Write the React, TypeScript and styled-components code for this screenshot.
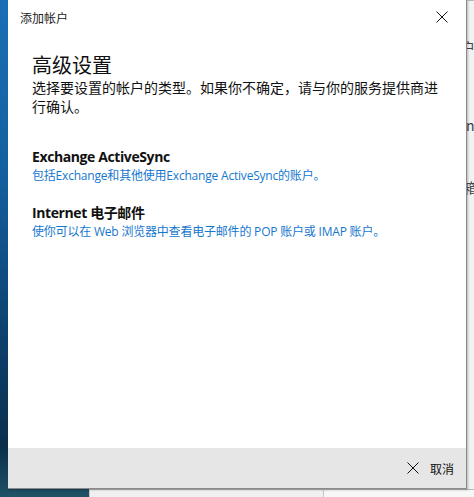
import React from "react";
import styled, { createGlobalStyle } from "styled-components";

const Global = createGlobalStyle`
  html, body { margin: 0; padding: 0; }
  body { width: 474px; height: 497px; overflow: hidden; }
`;

const FONT = `"Segoe UI", "Open Sans", "Noto Sans CJK SC", sans-serif`;

const Desktop = styled.div`
  position: relative;
  width: 474px;
  height: 497px;
  overflow: hidden;
  background: linear-gradient(180deg, #1b6fb5 0%, #14609f 35%, #0c3f6a 70%, #0a2f4c 90%, #1f5366 100%);
  font-family: ${FONT};
`;

const BackWindow = styled.div<{ $left: number; $top: number; $w: number; $h: number; $bg: string }>`
  position: absolute;
  left: ${(p) => p.$left}px;
  top: ${(p) => p.$top}px;
  width: ${(p) => p.$w}px;
  height: ${(p) => p.$h}px;
  background: ${(p) => p.$bg};
  border-left: 1px solid #c8c8c8;
  border-top: 1px solid #b8b8b8;
  box-sizing: border-box;
  overflow: hidden;
  font-family: "Noto Sans CJK SC", sans-serif;
  font-size: 14px;
  color: #444;
`;

const Fragment = styled.span<{ $left: number; $top: number }>`
  position: absolute;
  left: ${(p) => p.$left}px;
  top: ${(p) => p.$top}px;
  white-space: nowrap;
`;

const Dialog = styled.div`
  position: absolute;
  left: 8px;
  top: 0;
  width: 459px;
  height: 489px;
  background: #ffffff;
  border-right: 1px solid #8a8a8a;
  border-bottom: 1px solid #8a8a8a;
  box-sizing: border-box;
  box-shadow: 1px 1px 2px rgba(0, 0, 0, 0.25);
  display: flex;
  flex-direction: column;
`;

const TitleBar = styled.div`
  height: 34px;
  display: flex;
  align-items: center;
  justify-content: space-between;
  padding: 0 18px 0 12px;
  flex-shrink: 0;
`;

const TitleText = styled.span`
  font-family: "Noto Sans CJK SC", sans-serif;
  font-size: 12px;
  color: #222;
`;

const CloseBtn = styled.button`
  border: 0;
  background: transparent;
  padding: 0;
  width: 12px;
  height: 12px;
  display: flex;
  color: #111;
`;

const Body = styled.div`
  flex: 1;
  padding: 18px 24px 0 24px;
  display: flex;
  flex-direction: column;
`;

const Heading = styled.h1`
  margin: 0;
  font-family: "Noto Sans CJK SC", sans-serif;
  font-weight: 400;
  font-size: 20px;
  line-height: 26px;
  color: #111;
`;

const Description = styled.p`
  margin: 0;
  font-family: "Noto Sans CJK SC", sans-serif;
  font-size: 14px;
  line-height: 19px;
  color: #111;
  width: 412px;
`;

const OptionList = styled.div`
  margin-top: 31px;
  display: flex;
  flex-direction: column;
  gap: 18px;
`;

const Option = styled.div`
  display: flex;
  flex-direction: column;
  cursor: pointer;
`;

const OptionTitle = styled.div`
  font-family: ${FONT};
  font-weight: 700;
  font-size: 14px;
  letter-spacing: -0.4px;
  line-height: 19px;
  color: #111;
`;

const OptionDesc = styled.div`
  font-family: ${FONT};
  font-size: 12px;
  letter-spacing: -0.2px;
  line-height: 19px;
  color: #1677cf;
`;

const Footer = styled.div`
  height: 40px;
  background: #e6e6e6;
  display: flex;
  align-items: center;
  justify-content: flex-end;
  padding: 0 12px 0 0;
  flex-shrink: 0;
`;

const CancelBtn = styled.button`
  border: 0;
  background: transparent;
  display: flex;
  align-items: center;
  gap: 11px;
  padding: 0;
  font-family: "Noto Sans CJK SC", sans-serif;
  font-size: 12px;
  color: #111;
`;

const XIcon = ({ size }: { size: number }) => (
  <svg width={size} height={size} viewBox="0 0 12 12" fill="none" stroke="currentColor" strokeWidth="1">
    <path d="M0.5 0.5 L11.5 11.5 M11.5 0.5 L0.5 11.5" />
  </svg>
);

export default function App() {
  return (
    <>
      <Global />
      <Desktop>
        <BackWindow $left={466} $top={0} $w={20} $h={497} $bg="#f2f2f2">
          <Fragment $left={-6} $top={36}>户</Fragment>
          <Fragment $left={-1} $top={114}>n</Fragment>
          <Fragment $left={-4} $top={176}>箱</Fragment>
        </BackWindow>
        <BackWindow $left={89} $top={489} $w={234} $h={20} $bg="#f0f0f0" />
        <BackWindow $left={323} $top={489} $w={160} $h={20} $bg="#f7f7f7" />
        <Dialog>
          <TitleBar>
            <TitleText>添加帐户</TitleText>
            <CloseBtn aria-label="关闭">
              <XIcon size={12} />
            </CloseBtn>
          </TitleBar>
          <Body>
            <Heading>高级设置</Heading>
            <Description>选择要设置的帐户的类型。如果你不确定，请与你的服务提供商进行确认。</Description>
            <OptionList>
              <Option>
                <OptionTitle>Exchange ActiveSync</OptionTitle>
                <OptionDesc>包括Exchange和其他使用Exchange ActiveSync的账户。</OptionDesc>
              </Option>
              <Option>
                <OptionTitle>Internet 电子邮件</OptionTitle>
                <OptionDesc>使你可以在 Web 浏览器中查看电子邮件的 POP 账户或 IMAP 账户。</OptionDesc>
              </Option>
            </OptionList>
          </Body>
          <Footer>
            <CancelBtn>
              <XIcon size={12} />
              取消
            </CancelBtn>
          </Footer>
        </Dialog>
      </Desktop>
    </>
  );
}
